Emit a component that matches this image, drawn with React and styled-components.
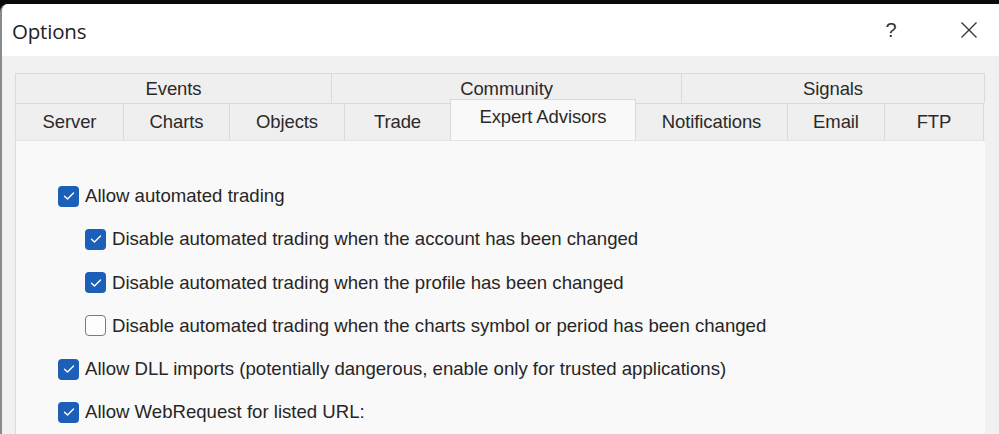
import React from "react";
import styled, { createGlobalStyle } from "styled-components";

const Global = createGlobalStyle`
  html, body { margin: 0; padding: 0; background: #0a0a0a; overflow: hidden; }
  body { font-family: "Liberation Sans", Arial, sans-serif; }
`;

const Dialog = styled.div`
  margin-top: 4px;
  height: 430px;
  background: #f1f1f1;
  border-left: 2px solid #8a8a8a;
  border-top-left-radius: 8px;
  overflow: hidden;
  display: flex;
  flex-direction: column;
`;

const TitleBar = styled.div`
  height: 52px;
  background: #ffffff;
  display: flex;
  align-items: center;
  padding: 0 0 0 10px;
  flex-shrink: 0;
`;

const Title = styled.div`
  flex: 1;
  font-family: "Open Sans", "Liberation Sans", sans-serif;
  font-size: 20.5px;
  color: #222;
  letter-spacing: -0.2px;
  margin-top: 1px;
`;

const TitleButton = styled.div`
  width: ${(p) => p.$w}px;
  display: flex;
  justify-content: center;
  align-items: center;
  color: #333;
  font-size: 20px;
  font-family: "Liberation Sans", sans-serif;
`;

const Body = styled.div`
  flex: 1;
  padding: 17px 14px 0 13px;
  display: flex;
  flex-direction: column;
`;

const TabRow = styled.div`
  display: flex;
  height: ${(p) => p.$h}px;
  align-items: stretch;
`;

const Tab = styled.div`
  width: ${(p) => p.$w}px;
  box-sizing: border-box;
  border: 1px solid #dadada;
  border-right: none;
  border-bottom: none;
  background: ${(p) => (p.$active ? "#f9f9f9" : "#efefef")};
  display: flex;
  justify-content: center;
  align-items: center;
  font-size: 18.5px;
  color: #2a2a2a;
  letter-spacing: -0.1px;
  position: relative;
  ${(p) =>
    p.$active &&
    `margin-top: -4px; border-right: 1px solid #dadada; margin-right: -1px; z-index: 1; padding-bottom: 6px;`}
  &:last-child { border-right: 1px solid #dadada; }
`;

const Panel = styled.div`
  flex: 1;
  background: #f9f9f9;
  border-left: 1px solid #dadada;
  border-top: 1px solid #e4e4e4;
  padding: 43px 0 0 42px;
  display: flex;
  flex-direction: column;
  gap: 19.3px;
`;

const Option = styled.label`
  display: flex;
  align-items: center;
  gap: 6px;
  height: 24px;
  margin-left: ${(p) => (p.$indent ? 27 : 0)}px;
  font-size: 18.6px;
  color: #262626;
  letter-spacing: 0;
`;

const Box = styled.span`
  width: 21px;
  height: 21px;
  box-sizing: border-box;
  border-radius: 4px;
  flex-shrink: 0;
  display: flex;
  align-items: center;
  justify-content: center;
  background: ${(p) => (p.$checked ? "#1b5fb8" : "#fdfdfd")};
  border: ${(p) => (p.$checked ? "none" : "1.5px solid #7a7a7a")};
`;

const Check = () => (
  <svg width="12" height="10" viewBox="0 0 12 10">
    <path d="M1.5 5.2 L4.5 8 L10.5 2" fill="none" stroke="#ffffff" strokeWidth="1.4" strokeLinecap="round" strokeLinejoin="round" />
  </svg>
);

const row1 = [
  ["Events", 316],
  ["Community", 350],
  ["Signals", 304],
];
const row2 = [
  ["Server", 108],
  ["Charts", 106],
  ["Objects", 115],
  ["Trade", 106],
  ["Expert Advisors", 186, true],
  ["Notifications", 152],
  ["Email", 97],
  ["FTP", 100],
];

const options = [
  ["Allow automated trading", true, false],
  ["Disable automated trading when the account has been changed", true, true],
  ["Disable automated trading when the profile has been changed", true, true],
  ["Disable automated trading when the charts symbol or period has been changed", false, true],
  ["Allow DLL imports (potentially dangerous, enable only for trusted applications)", true, false],
  ["Allow WebRequest for listed URL:", true, false],
];

export default function App() {
  return (
    <>
      <Global />
      <Dialog>
        <TitleBar>
          <Title>Options</Title>
          <TitleButton $w={40}>?</TitleButton>
          <TitleButton $w={38} />
          <TitleButton $w={40}>
            <svg width="18" height="18" viewBox="0 0 18 18">
              <path d="M1.5 1.5 L16.5 16.5 M16.5 1.5 L1.5 16.5" stroke="#333" strokeWidth="1.3" />
            </svg>
          </TitleButton>
          <TitleButton $w={10} />
        </TitleBar>
        <Body>
          <TabRow $h={30}>
            {row1.map(([t, w]) => (
              <Tab key={t} $w={w}>{t}</Tab>
            ))}
          </TabRow>
          <TabRow $h={37}>
            {row2.map(([t, w, a]) => (
              <Tab key={t} $w={w} $active={a}>{t}</Tab>
            ))}
          </TabRow>
          <Panel>
            {options.map(([t, c, i]) => (
              <Option key={t} $indent={i}>
                <Box $checked={c}>{c && <Check />}</Box>
                {t}
              </Option>
            ))}
          </Panel>
        </Body>
      </Dialog>
    </>
  );
}
